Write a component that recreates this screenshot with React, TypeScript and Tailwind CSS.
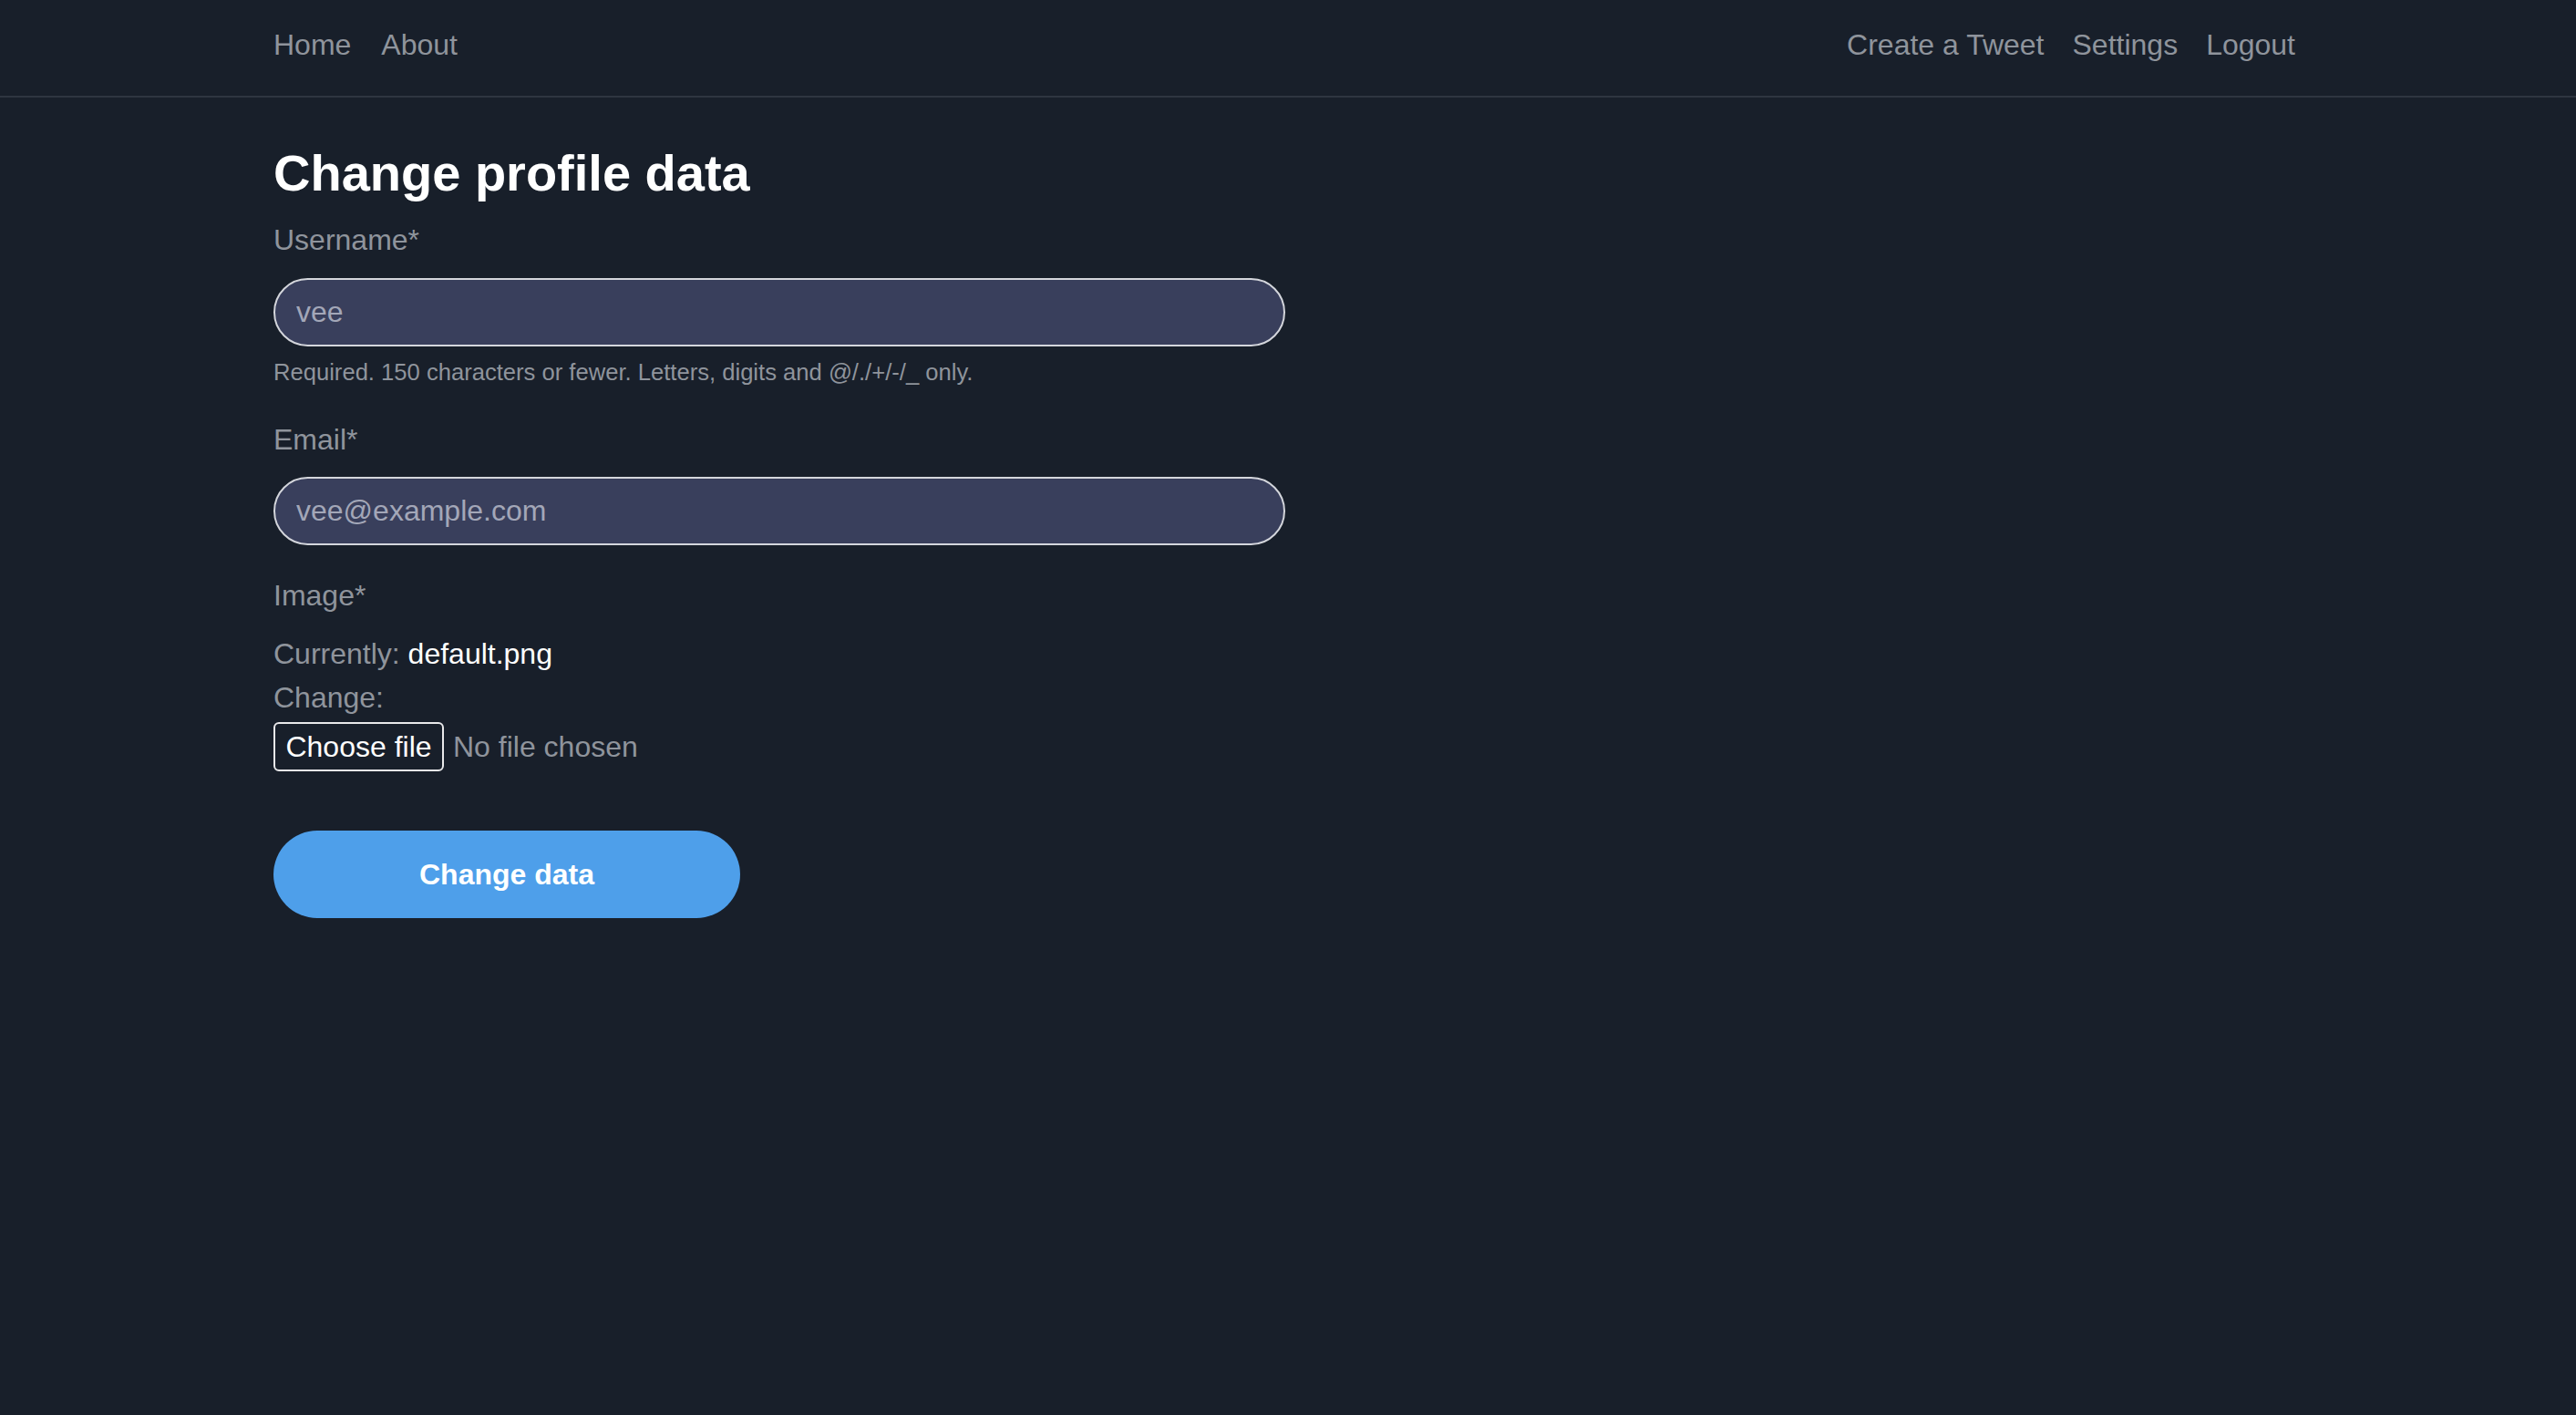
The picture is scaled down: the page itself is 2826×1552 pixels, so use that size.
export default function App() {
  const font = { fontFamily: '"Liberation Sans", Arial, Helvetica, sans-serif' };
  return (
    <div className="min-h-[1552px] w-full bg-[#181f2a] text-[#8f949c]" style={font}>
      <nav className="h-[107px] border-b-2 border-[#2e3540]">
        <div className="mx-auto flex w-[2226px] justify-between pt-[25px] text-[32px] leading-[48px]">
          <div className="flex gap-[33px]">
            <a className="text-[#8f949c]">Home</a>
            <a className="text-[#8f949c]">About</a>
          </div>
          <div className="flex gap-[31px] pr-[8px]">
            <a className="text-[#8f949c]">Create a Tweet</a>
            <a className="text-[#8f949c]">Settings</a>
            <a className="text-[#8f949c]">Logout</a>
          </div>
        </div>
      </nav>
      <main className="mx-auto w-[2226px]">
        <h1 className="mt-[50px] text-[56px] font-bold leading-[65px] text-white">Change profile data</h1>
        <form className="flex flex-col text-[32px] leading-[48px]">
          <label className="mt-[17px]">Username*</label>
          <input
            readOnly
            defaultValue="vee"
            className="mt-[18px] h-[75px] w-[1110px] rounded-full border-2 border-[#d4d6dc] bg-[#393f5c] px-[23px] text-[32px] text-[#a3a7b8] outline-none"
            style={font}
          />
          <p className="mt-[10px] text-[25.6px] leading-[37px] text-[#8f949c]">
            Required. 150 characters or fewer. Letters, digits and @/./+/-/_ only.
          </p>
          <label className="mt-[31px]">Email*</label>
          <input
            readOnly
            defaultValue="vee@example.com"
            className="mt-[17px] h-[75px] w-[1110px] rounded-full border-2 border-[#d4d6dc] bg-[#393f5c] px-[23px] text-[32px] text-[#a3a7b8] outline-none"
            style={font}
          />
          <label className="mt-[31px]">Image*</label>
          <div className="mt-[16px]">
            Currently: <span className="text-white">default.png</span>
          </div>
          <div>Change:</div>
          <div className="mt-[3px] flex items-center gap-[10px]">
            <span className="flex h-[54px] w-[187px] items-center justify-center rounded-[6px] border-2 border-[#e8e8ea] text-[32px] text-white">
              Choose file
            </span>
            <span className="text-[#8f949c]">No file chosen</span>
          </div>
          <button
            type="button"
            className="mt-[65px] h-[96px] w-[512px] rounded-full bg-[#4e9fea] text-[32px] font-bold text-white"
            style={font}
          >
            Change data
          </button>
        </form>
      </main>
    </div>
  );
}
